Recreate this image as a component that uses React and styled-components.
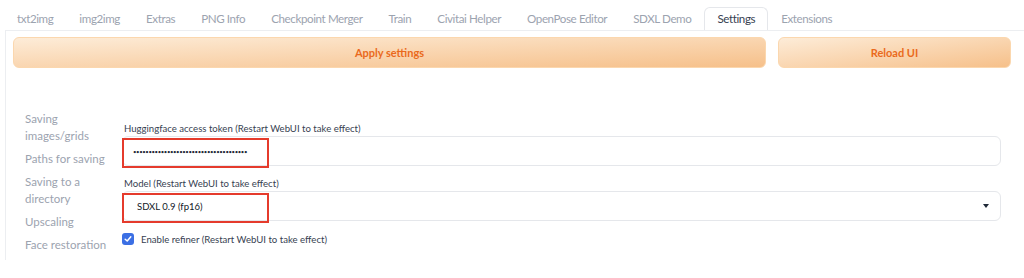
import styled, { createGlobalStyle } from "styled-components"

const GlobalStyle = createGlobalStyle`
  body {
    margin: 0;
    background: #fff;
    font-family: Lato, "Open Sans", sans-serif;
  }
`

const Page = styled.div`
  width: 1024px;
  height: 278px;
  overflow: hidden;
  padding: 7px 0 0 4px;
  box-sizing: border-box;
`

const TabBar = styled.div`
  display: flex;
  height: 23px;
`

const Tab = styled.div`
  padding: 0 12px;
  height: 23px;
  line-height: 22px;
  font-size: 11.6px;
  letter-spacing: -0.4px;
  color: ${(p) => (p.$active ? "#374151" : "#9ca3af")};
  border: 1px solid ${(p) => (p.$active ? "#e5e7eb" : "transparent")};
  border-bottom: none;
  border-radius: 6px 6px 0 0;
  background: #fff;
  box-sizing: border-box;
  margin-bottom: -1px;
  position: relative;
  z-index: 1;
`

const Panel = styled.div`
  margin-left: 1px;
  border-top: 1px solid #eceef1;
  border-left: 1px solid #eceef1;
  padding: 6px 8px 0 7px;
  height: 230px;
  box-sizing: border-box;
`

const ButtonRow = styled.div`
  display: flex;
  gap: 12px;
  width: 998px;
`

const Button = styled.button`
  flex: ${(p) => (p.$grow ? "1" : "0 0 233px")};
  height: 31px;
  border: 1px solid #fbd7ae;
  border-radius: 6px;
  background: linear-gradient(to bottom right, #fdecd8, #f6c08a);
  color: #ea6a1c;
  font-family: inherit;
  font-size: 11px;
  font-weight: 700;
`

const Content = styled.div`
  display: flex;
  margin-top: 42px;
`

const Sidebar = styled.div`
  flex: 0 0 109px;
  padding-left: 12px;
  display: flex;
  flex-direction: column;
  gap: 6px;
  box-sizing: border-box;
`

const NavItem = styled.div`
  font-size: 11.5px;
  line-height: 17px;
  color: #9ca3af;
  width: 90px;
`

const Main = styled.div`
  flex: 0 0 879px;
  padding-top: 12px;
  display: flex;
  flex-direction: column;
`

const Field = styled.div`
  margin-bottom: 11px;
`

const Label = styled.div`
  font-size: 9.6px;
  color: #374151;
  margin: 0 0 1px 2px;
  line-height: 13px;
`

const InputBox = styled.div`
  position: relative;
  height: 30px;
  border: 1px solid #e5e7eb;
  border-radius: 6px;
  display: flex;
  align-items: center;
  justify-content: space-between;
  padding: 0 11px 0 ${(p) => p.$pad}px;
  box-sizing: border-box;
  font-size: 9.5px;
  color: #111827;
`

const Dots = styled.span`
  font-size: 6px;
  letter-spacing: -0.4px;
  color: #1f2937;
`

const Highlight = styled.div`
  position: absolute;
  left: -1px;
  top: 1px;
  width: 147px;
  height: 30px;
  border: 2px solid #e53b2c;
  box-sizing: border-box;
`

const Caret = styled.span`
  width: 0;
  height: 0;
  border-left: 3.5px solid transparent;
  border-right: 3.5px solid transparent;
  border-top: 4px solid #1f2937;
`

const CheckRow = styled.div`
  display: flex;
  align-items: center;
  gap: 7px;
  font-size: 9.6px;
  color: #374151;
  margin-top: 1px;
`

const Check = styled.span`
  width: 12px;
  height: 12px;
  border-radius: 3px;
  background: #3b6fe4;
  display: flex;
  align-items: center;
  justify-content: center;
`

const tabs = [
  "txt2img",
  "img2img",
  "Extras",
  "PNG Info",
  "Checkpoint Merger",
  "Train",
  "Civitai Helper",
  "OpenPose Editor",
  "SDXL Demo",
  "Settings",
  "Extensions",
]

const sections = [
  "Saving images/grids",
  "Paths for saving",
  "Saving to a directory",
  "Upscaling",
  "Face restoration",
]

export default function App() {
  return (
    <Page>
      <GlobalStyle />
      <TabBar>
        {tabs.map((t) => (
          <Tab key={t} $active={t === "Settings"}>
            {t}
          </Tab>
        ))}
      </TabBar>
      <Panel>
        <ButtonRow>
          <Button $grow>Apply settings</Button>
          <Button>Reload UI</Button>
        </ButtonRow>
        <Content>
          <Sidebar>
            {sections.map((s) => (
              <NavItem key={s}>{s}</NavItem>
            ))}
          </Sidebar>
          <Main>
            <Field>
              <Label>Huggingface access token (Restart WebUI to take effect)</Label>
              <InputBox $pad={10}>
                <Dots>{"•".repeat(37)}</Dots>
                <Highlight />
              </InputBox>
            </Field>
            <Field>
              <Label>Model (Restart WebUI to take effect)</Label>
              <InputBox $pad={14}>
                <span>SDXL 0.9 (fp16)</span>
                <Caret />
                <Highlight />
              </InputBox>
            </Field>
            <CheckRow>
              <Check>
                <svg width="8" height="8" viewBox="0 0 8 8">
                  <path d="M1.2 4.2 L3.2 6 L6.8 1.8" stroke="#fff" strokeWidth="1.5" fill="none" strokeLinecap="round" strokeLinejoin="round" />
                </svg>
              </Check>
              Enable refiner (Restart WebUI to take effect)
            </CheckRow>
          </Main>
        </Content>
      </Panel>
    </Page>
  )
}
